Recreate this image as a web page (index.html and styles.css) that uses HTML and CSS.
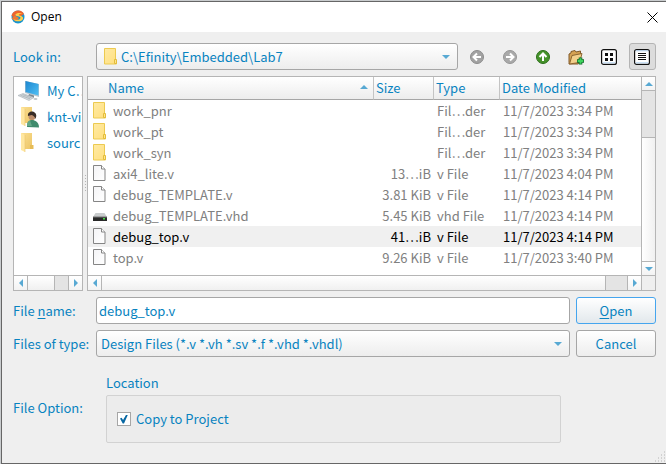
FILE: index.html
```html
<!DOCTYPE html>
<html lang="en">
<head>
<meta charset="utf-8">
<title>Open</title>
<link rel="stylesheet" href="styles.css">
</head>
<body>
<svg class="defs" aria-hidden="true">
  <defs>
    <linearGradient id="gold" x1="0" y1="0" x2="1" y2="1"><stop offset="0" stop-color="#ffeaa4"/><stop offset="1" stop-color="#ffdf7e"/></linearGradient>
    <linearGradient id="paper" x1="0" y1="0" x2="1" y2="1"><stop offset="0" stop-color="#f4f4f6"/><stop offset="1" stop-color="#ffffff"/></linearGradient>
    <linearGradient id="flap" x1="0" y1="0" x2="1" y2="1"><stop offset="0" stop-color="#fbdf92"/><stop offset="1" stop-color="#ecc566"/></linearGradient>
    <linearGradient id="screen" x1="0" y1="0" x2="1" y2="1"><stop offset="0" stop-color="#1d86cf"/><stop offset="1" stop-color="#4fc0f5"/></linearGradient>
    <symbol id="folder" viewBox="0 0 14 17">
      <path d="M.5 .5h11v11.500l1 1v3h-12z" fill="url(#gold)" stroke="#ecca50"/>
      <path d="M10.500 15.500v-4h2v4z" fill="#ffe58c" stroke="#e3bc3a"/>
    </symbol>
    <symbol id="file" viewBox="0 0 14 17">
      <path d="M.5 .5h8l3.500 3.500v11.500H.5z" fill="url(#paper)" stroke="#858585"/>
      <path d="M8.500 .5V4H12" fill="#fff" stroke="#858585"/>
    </symbol>
    <symbol id="drive" viewBox="0 0 14 17">
      <path d="M2.500 6h9L14 10H0z" fill="#c9cccd"/>
      <path d="M0 10h14v4H0z" fill="#292929"/>
      <path d="M0 10h14" stroke="#777"/>
      <path d="M10 11h2v1.500h-2z" fill="#45df45"/>
    </symbol>
    <symbol id="place" viewBox="0 0 22 22">
      <path d="M3 1h11v16H7z" fill="url(#flap)"/>
      <path d="M12 13h3.500v4H12z" fill="#e6bc58"/>
      <path d="M3 1l4 2v17l-4-2z" fill="#ffe7a1"/>
      <path d="M7 3v17" stroke="#e9c36a" stroke-width=".6"/>
    </symbol>
  </defs>
</svg>
<main class="dialog">
  <header class="titlebar">
    <svg class="logo" viewBox="0 0 14 14" aria-hidden="true">
      <circle cx="7" cy="7" r="6.500" fill="#1795cf"/>
      <path d="M.5 5.500C1.500 2 4.300.4 7.500.5c2.500.1 4.600 1.500 5.500 3.500L9.500 6.500 5 4.500 3 8z" fill="#f0642b"/>
      <path d="M.5 8.500L4 5.500l4 2.500-3 3.500z" fill="#ef7a32"/>
      <path d="M11.500 3.500C8.500 2.500 5 3 4.400 4.800 4 6.600 9.800 6 9.500 8c-.3 2-4.500 2.500-7 1.200 1.500 2.800 8.500 3 9.500-.5C13 5.500 7.500 6 7.800 4.700c.2-.8 2-.9 3.700-1.200z" fill="#ffcf4a"/>
    </svg>
    <h1 class="title">Open</h1>
    <button class="close" aria-label="Close"><svg viewBox="0 0 11 11"><path d="M.5 .5l10 10M10.500 .5l-10 10" stroke="#000" fill="none"/></svg></button>
  </header>

  <form class="form">
    <label class="label" for="dir">Look in:</label>
    <div class="toolbar">
      <div class="combo combo-dir">
        <svg class="ico combo-ico" aria-hidden="true"><use href="#folder"/></svg>
        <select id="dir"><option>C:\Efinity\Embedded\Lab7</option></select>
      </div>
      <button type="button" class="tool" aria-label="Back"><svg viewBox="-1 -1 16 16"><circle cx="7" cy="7" r="6.500" fill="#a2a2a2" stroke="#8c8c8c"/><path d="M11 7H4M7 3.500L3.500 7 7 10.500" fill="none" stroke="#fff" stroke-width="2"/></svg></button>
      <button type="button" class="tool" aria-label="Forward"><svg viewBox="-1 -1 16 16"><circle cx="7" cy="7" r="6.500" fill="#a9a9a9" stroke="#969696"/><path d="M3 7h7M7 3.500L10.500 7 7 10.500" fill="none" stroke="#fff" stroke-width="2"/></svg></button>
      <button type="button" class="tool" aria-label="Parent directory"><svg viewBox="-1 -1 16 16"><circle cx="7" cy="7" r="6.500" fill="#45922a" stroke="#2d701b"/><path d="M7 11V4M3.500 7L7 3.500 10.500 7" fill="none" stroke="#fff" stroke-width="2"/></svg></button>
      <button type="button" class="tool" aria-label="New folder"><svg viewBox="0 0 16 16"><path d="M1 13.500V5l2-1V2.500l4-1L8 3l4.500-1v9L10 15H1z" fill="#d5a253" stroke="#80592a"/><path d="M1.500 15L4 6.500l10-2-2.500 9z" fill="#f2cf8b" stroke="#8c642f"/><path d="M12.500 8.500v7M9 12h7" stroke="#11682a" stroke-width="3.600"/><path d="M12.500 9.200v5.600M9.700 12h5.600" stroke="#3ed35d" stroke-width="2"/></svg></button>
      <button type="button" class="tool" aria-label="List view"><svg viewBox="0 0 16 16"><rect x=".6" y=".6" width="14.800" height="14.800" rx="2" fill="#fff" stroke="#111" stroke-width="1.200"/><path d="M1.800 13.800h12.400" stroke="#b5d5f2"/><path d="M4 4h3v3H4zM9 4h3v3H9zM4 9h3v3H4zM9 9h3v3H9z" fill="#111"/></svg></button>
      <button type="button" class="tool tool-on" aria-label="Detail view" aria-pressed="true"><svg viewBox="0 0 16 16"><rect x=".6" y=".6" width="14.800" height="14.800" rx="2" fill="#fff" stroke="#111" stroke-width="1.200"/><path d="M1.800 13.800h12.400M1.800 1.800h12.400" stroke="#b5d5f2"/><path d="M4 4.500h8M4 6.500h8M4 8.500h8M4 10.500h8" stroke="#111"/></svg></button>
    </div>

    <div class="panes">
      <nav class="places">
        <ul class="place-list">
          <li><svg class="place-ico" viewBox="0 0 22 22" aria-hidden="true"><path d="M7 1l14 3v13L7 13z" fill="#b8c6ce"/><path d="M7.500 1l13 3v11.500l-13-3.500z" fill="url(#screen)"/><path d="M11 14l5 1.500v2.500l-6-2z" fill="#7b8991"/><path d="M0 15.500l5-2 11 4-5 3z" fill="#d5dadd" stroke="#a8b0b5" stroke-width=".6"/><path d="M2.500 15.300l9.500 3.500M4.500 14.500l9 3.400" stroke="#909aa1" stroke-width=".5"/><ellipse cx="17.500" cy="19" rx="2" ry="1" fill="#bdc4c8"/></svg><a href="#">My C…</a></li>
          <li><svg class="place-ico" viewBox="0 0 22 22" aria-hidden="true"><use href="#place"/><path d="M9 21c0-5 2-7 5-7s7 2 7 7.500z" fill="#3f8b6d"/><path d="M9 20c0-4 1-5 3-5.500L14 20z" fill="#64a888"/><circle cx="14" cy="10.500" r="3.500" fill="#bd8e6c"/><path d="M10 10c-1-6 8.500-6 8.300 0l-.8 3c-.5-2-2-3.500-4-4z" fill="#382d27"/></svg><a href="#">knt-vi</a></li>
          <li><svg class="place-ico" viewBox="0 0 22 22" aria-hidden="true"><use href="#place"/></svg><a href="#">sourc</a></li>
        </ul>
        <div class="hbar" aria-hidden="true"><span class="step left"></span><span class="thumb"></span><span class="track track-short"></span><span class="step right"></span></div>
      </nav>
      <div class="grip" aria-hidden="true"></div>
      <section class="files">
        <div class="listing">
          <table>
            <colgroup><col><col class="c-size"><col class="c-type"><col class="c-date"></colgroup>
            <thead><tr><th class="c-name">Name<i class="sort"></i></th><th>Size</th><th>Type</th><th>Date Modified</th></tr></thead>
            <tbody>
              <tr><td><span class="name"><svg class="ico"><use href="#folder"/></svg>work_pnr</span></td><td></td><td>Fil…der</td><td>11/7/2023 3:34 PM</td></tr>
              <tr><td><span class="name"><svg class="ico"><use href="#folder"/></svg>work_pt</span></td><td></td><td>Fil…der</td><td>11/7/2023 3:34 PM</td></tr>
              <tr><td><span class="name"><svg class="ico"><use href="#folder"/></svg>work_syn</span></td><td></td><td>Fil…der</td><td>11/7/2023 3:34 PM</td></tr>
              <tr><td><span class="name"><svg class="ico"><use href="#file"/></svg>axi4_lite.v</span></td><td>13…iB</td><td>v File</td><td>11/7/2023 4:04 PM</td></tr>
              <tr><td><span class="name"><svg class="ico"><use href="#file"/></svg>debug_TEMPLATE.v</span></td><td>3.81 KiB</td><td>v File</td><td>11/7/2023 4:14 PM</td></tr>
              <tr><td><span class="name"><svg class="ico"><use href="#drive"/></svg>debug_TEMPLATE.vhd</span></td><td>5.45 KiB</td><td>vhd File</td><td>11/7/2023 4:14 PM</td></tr>
              <tr class="current"><td><span class="name"><svg class="ico"><use href="#file"/></svg>debug_top.v</span></td><td>41…iB</td><td>v File</td><td>11/7/2023 4:14 PM</td></tr>
              <tr><td><span class="name"><svg class="ico"><use href="#file"/></svg>top.v</span></td><td>9.26 KiB</td><td>v File</td><td>11/7/2023 3:40 PM</td></tr>
            </tbody>
          </table>
        </div>
        <div class="vbar" aria-hidden="true"><span class="step up"></span><span class="track"></span><span class="thumb"></span><span class="step down"></span></div>
        <div class="hbar" aria-hidden="true"><span class="step left"></span><span class="thumb"></span><span class="track"></span><span class="step right"></span></div>
        <div class="corner"></div>
      </section>
    </div>

    <label class="label" for="fname">File <u>n</u>ame:</label>
    <input class="text" id="fname" type="text" value="debug_top.v">
    <button type="button" class="btn btn-default"><u>O</u>pen</button>

    <label class="label" for="ftype">Files of type:</label>
    <div class="combo">
      <select id="ftype"><option>Design Files (*.v *.vh *.sv *.f *.vhd *.vhdl)</option></select>
    </div>
    <button type="button" class="btn">Cancel</button>

    <span class="label label-option">File Option:</span>
    <fieldset class="group">
      <legend>Location</legend>
      <div class="group-box">
        <label class="check"><input type="checkbox" checked>Copy to Project</label>
      </div>
    </fieldset>
  </form>
  <svg class="resize" viewBox="0 0 12 12" aria-hidden="true"><path d="M10 1h1M7 4h1M10 4h1M4 7h1M7 7h1M10 7h1M1 10h1M4 10h1M7 10h1M10 10h1" stroke="#b4b4b4" stroke-width="1"/></svg>
</main>
</body>
</html>
```

FILE: styles.css
```css
:root {
  --ink: #0883c0;
  --line: #b5b5b5;
  --edge: #a6a6a6;
  --face: #efefef;
  --shade: linear-gradient(#ffffff, #ededed);
}

* { box-sizing: border-box; }

body {
  margin: 0;
  padding: 1px 0 0 1px;
  background: #c9ccce;
  font: 13px/20px "Noto Sans CJK SC", "Noto Sans", sans-serif;
  color: var(--ink);
}

button, input, select { font: inherit; color: inherit; margin: 0; }
u { text-underline-offset: 2px; }
.defs { position: absolute; width: 0; height: 0; }

.dialog {
  position: relative;
  display: flex;
  flex-direction: column;
  min-height: calc(100vh - 1px);
  background: var(--face);
  border: 1px solid #666;
  border-right: 0;
}

.titlebar {
  display: flex;
  align-items: center;
  height: 30px;
  padding: 0 8px 0 9px;
  background: #fff;
  color: #000;
}
.logo { width: 14px; height: 14px; }
.title { flex: 1; margin: 0 0 0 6px; font: 12px/16px "Open Sans", "Noto Sans", sans-serif; }
.close { display: flex; padding: 0; border: 0; background: none; }
.close svg { width: 11px; height: 11px; }

.form {
  flex: 1;
  display: grid;
  grid-template-columns: 77px 1fr 80px;
  grid-template-rows: 27px 1fr 27px 27px auto;
  gap: 6px;
  padding: 11px 10px 20px 11px;
}
.label { align-self: center; white-space: nowrap; }
.label-option { padding-top: 10px; }

.toolbar { grid-column: 2 / 4; display: flex; gap: 6px; }
.combo { position: relative; display: flex; }
.combo-dir { flex: 1; }
.combo::after {
  content: "";
  position: absolute;
  right: 8px;
  top: 12px;
  border: 4px solid transparent;
  border-top-color: #58a9d3;
  border-bottom: 0;
  pointer-events: none;
}
.combo select {
  flex: 1;
  width: 100%;
  appearance: none;
  padding: 0 20px 0 4px;
  border: 1px solid var(--edge);
  border-radius: 3px;
  background: var(--shade);
}
.combo-dir select { padding-left: 24px; }
.combo-ico { position: absolute; left: 8px; top: 5px; }
.ico { flex: none; width: 14px; height: 17px; }

.tool {
  display: flex;
  align-items: center;
  width: 27px;
  padding: 0 4px;
  border: 1px solid transparent;
  border-radius: 3px;
  background: none;
}
.tool-on { background: #dcdcdc; border-color: #b4b4b4; }
.tool svg { flex: none; width: 16px; height: 16px; }

.panes { grid-column: 1 / 4; display: flex; min-height: 0; }
.places {
  width: 70px;
  display: flex;
  flex-direction: column;
  border: 1px solid var(--line);
  background: #fff;
}
.place-list { flex: 1; margin: 0; padding: 1px 0 0; list-style: none; overflow: hidden; }
.place-list li { display: flex; align-items: center; height: 26px; padding-left: 4px; white-space: nowrap; }
.place-list a { margin-left: 7px; color: inherit; text-decoration: none; }
.place-ico { flex: none; width: 22px; height: 22px; }
.grip {
  width: 4px;
  align-self: center;
  height: 18px;
  background: linear-gradient(#b4b4b4 1px, transparent 1px) 2px 0 / 1px 3px repeat-y;
}

.files {
  flex: 1;
  display: grid;
  grid-template-columns: 1fr 14px;
  grid-template-rows: 1fr 15px;
  border: 1px solid var(--line);
  background: #fff;
}
.listing { min-width: 0; overflow: hidden; }
table { width: 100%; table-layout: fixed; border-collapse: separate; border-spacing: 0; color: #808080; }
.c-size { width: 60px; }
.c-type { width: 66px; }
.c-date { width: 142px; }
th {
  height: 23px;
  padding: 0 2px;
  border-bottom: 1px solid var(--edge);
  border-left: 1px solid #c4c4c4;
  background: var(--shade);
  color: var(--ink);
  font-weight: 400;
  text-align: left;
}
.c-name { position: relative; padding-left: 20px; border-left: 0; }
.sort {
  position: absolute;
  right: 5px;
  top: 8px;
  border: 4px solid transparent;
  border-bottom-color: #58a9d3;
  border-top: 0;
}
td { height: 21px; padding: 0 4px; line-height: 20px; white-space: nowrap; }
td:nth-child(2) { text-align: right; padding-right: 2px; }
.name { display: flex; align-items: center; gap: 6px; padding-left: 1px; }
.current { background: #f0f0f0; color: #000; }

.hbar { display: flex; height: 15px; border-top: 1px solid var(--line); }
.vbar { display: flex; flex-direction: column; border-left: 1px solid var(--line); }
.corner { border: 1px solid var(--line); border-right: 0; border-bottom: 0; background: var(--face); }
.step { flex: none; display: grid; place-items: center; width: 13px; height: 14px; background: linear-gradient(#fff, #f3f3f3); }
.step::before { content: ""; border: 4px solid transparent; }
.left::before { border-right-color: #58a9d3; border-left: 0; }
.right::before { border-left-color: #58a9d3; border-right: 0; }
.up::before { border-bottom-color: #58a9d3; border-top: 0; }
.down::before { border-top-color: #58a9d3; border-bottom: 0; }
.track { background: #e4e4e4; }
.thumb { flex: 1; background: linear-gradient(#fff, #f0f0f0); }
.hbar .thumb { border: solid var(--line); border-width: 0 1px; }
.hbar .track { width: 21px; }
.hbar .track-short { width: 13px; }
.hbar .right { border-left: 1px solid var(--line); width: 14px; }
.vbar .thumb { flex: 73; border: solid var(--line); border-width: 1px 0; background: linear-gradient(90deg, #fff, #f0f0f0); }
.vbar .track { flex: 27; border-top: 1px solid var(--line); }
.vbar .step { height: 13px; }

.text {
  min-width: 0;
  padding: 0 2px;
  border: 1px solid var(--edge);
  border-radius: 3px;
  background: #fff;
}
.btn {
  padding: 0;
  border: 1px solid var(--edge);
  border-radius: 3px;
  background: var(--shade);
}
.btn-default { border-color: #45a5ee; background: linear-gradient(#ffffff, #e2e8ec); }

.group { min-width: 0; margin: 10px 9px 0 10px; padding: 0; border: 0; }
.group legend { padding: 0; }
.group-box {
  display: flex;
  align-items: center;
  height: 48px;
  margin-top: 2px;
  padding-left: 10px;
  border: 1px solid #d2d2d2;
  border-radius: 2px;
  background: #ececec;
}
.check { display: flex; align-items: center; gap: 5px; }
.check input {
  appearance: none;
  width: 14px;
  height: 14px;
  border: 1px solid var(--edge);
  background: #fff;
  display: grid;
  place-items: center;
}
.check input:checked::before {
  content: "";
  width: 8px;
  height: 9px;
  background: #0868a3;
  clip-path: polygon(0 45%, 20% 35%, 38% 62%, 78% 0, 100% 0, 50% 100%, 34% 100%);
}
.resize { position: absolute; right: 0; bottom: 0; width: 12px; height: 12px; }
```
